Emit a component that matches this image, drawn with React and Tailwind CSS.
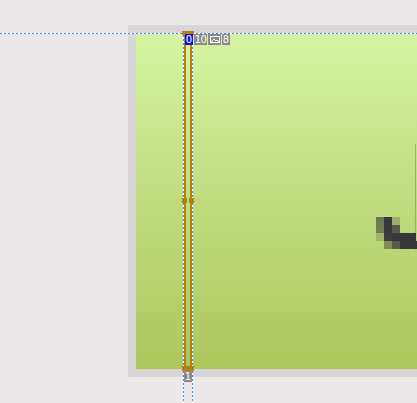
import React from 'react';

const dark = '#36383a';

// zoomed-in pixel fragment at the right edge of the canvas
const pixels = [
  [0, 0, 8, 8, '#6f7652'],
  [8, 0, 8, 8, dark],
  [16, 0, 8, 8, '#9fac6c'],
  [0, 8, 8, 8, '#737d52'],
  [8, 8, 8, 8, dark],
  [16, 8, 8, 8, '#565a4a'],
  [0, 16, 8, 8, '#a4b46c'],
  [8, 16, 8, 8, '#3c3e3c'],
  [16, 16, 24, 8, dark],
  [8, 24, 8, 8, '#7f8c5a'],
  [16, 24, 8, 8, '#585b4c'],
  [24, 24, 24, 8, dark],
];

const guideV = 'w-[1px] bg-[repeating-linear-gradient(180deg,#4d85f5_0_2px,#ffffff_2px_4px)]';

function Tag({ children, className = '' }) {
  return (
    <div className={'h-[11px] flex items-center justify-center text-[10px] leading-none text-white ' + className}>
      {children}
    </div>
  );
}

export default function App() {
  return (
    <div
      className="relative w-[417px] h-[403px] bg-[#ece8e7] overflow-hidden pt-[25px] pl-[128px]"
      style={{ fontFamily: '"DejaVu Sans", "Liberation Sans", sans-serif' }}
    >
      <div className="h-[352px] bg-[#d7d5d5] py-2 pl-2">
        <div className="relative h-full bg-gradient-to-b from-[#d5f3a1] to-[#adc65b] overflow-hidden">
          <div className="absolute left-[279px] top-[111px] w-[1px] h-[106px] bg-[#9fb06a]" />
          <svg className="absolute left-[240px] top-[184px]" width="48" height="32">
            {pixels.map(([x, y, w, h, c], i) => (
              <rect key={i} x={x} y={y} width={w} height={h} fill={c} />
            ))}
          </svg>
        </div>
      </div>

      {/* horizontal guide */}
      <div className="absolute left-0 right-0 top-[33px] h-[1px] bg-[repeating-linear-gradient(90deg,#4d85f5_0_2px,#ffffff_2px_4px)]" />
      <div className="absolute left-0 right-0 top-[36px] h-[1px] bg-[repeating-linear-gradient(90deg,#dde5ee_0_2px,transparent_2px_4px)]" />

      {/* selected column with its guides */}
      <div className="absolute left-[182px] top-[31px] bottom-0 w-[12px] flex flex-col">
        <div className="h-[4px] bg-[#b8800a] shrink-0" />
        <div className="relative h-[331px] shrink-0 flex justify-between px-[1px]">
          <div className="flex">
            <div className={guideV} />
            <div className="w-[2px] bg-[#b8800a]" />
          </div>
          <div className="absolute inset-x-0 top-[163px] flex justify-between">
            <div className="w-[5px] h-[5px] bg-[#b8800a]" />
            <div className="w-[5px] h-[5px] bg-[#b8800a]" />
          </div>
          <div className="flex">
            <div className="w-[2px] bg-[#b8800a]" />
            <div className={guideV} />
          </div>
        </div>
        <div className="h-[5px] bg-[#b8800a] shrink-0" />
        <div className="flex-1 flex justify-between px-[1px]">
          <div className={guideV} />
          <Tag className="w-[8px] h-[10px] bg-[#8b8b8b] self-start">1</Tag>
          <div className={guideV} />
        </div>
      </div>

      {/* labels */}
      <div className="absolute left-[185px] top-[34px] flex gap-[1px]">
        <Tag className="w-[8px] bg-[#0a14e0]">0</Tag>
        <Tag className="w-[13px] bg-[#8b8b8b] tracking-[-0.5px]">10</Tag>
        <Tag className="w-[13px] bg-[#8b8b8b]">
          <svg width="10" height="7" viewBox="0 0 10 7" fill="none" stroke="#fff" strokeWidth="1">
            <rect x="0.5" y="0.5" width="9" height="6" />
            <path d="M1 6 L4 3 L6 5 L7 4 L9 6" />
          </svg>
        </Tag>
        <Tag className="w-[8px] bg-[#8b8b8b]">8</Tag>
      </div>
    </div>
  );
}
